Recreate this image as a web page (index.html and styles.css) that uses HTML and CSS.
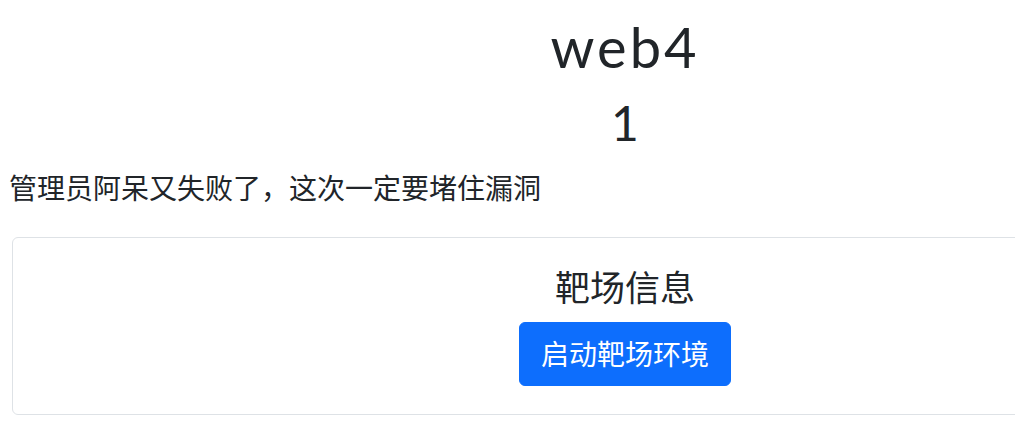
FILE: index.html
```html
<!DOCTYPE html>
<html lang="zh-CN">
<head>
    <meta charset="UTF-8">
    <meta name="viewport" content="width=device-width, initial-scale=1.0">
    <title>web4</title>
    <link rel="stylesheet" href="styles.css">
</head>
<body>
    <div class="page">
        <h1 class="title">web4</h1>
        <h2 class="level">1</h2>
        <p class="desc">管理员阿呆又失败了，这次一定要堵住漏洞</p>

        <div class="card">
            <div class="card-body">
                <h5 class="card-title">靶场信息</h5>
                <button class="btn-start">启动靶场环境</button>
            </div>
        </div>
    </div>
</body>
</html>
```

FILE: styles.css
```css
html {
    overflow: hidden;
}

body {
    margin: 0;
    background-color: #fff;
    color: #212529;
    font-family: Lato, "Noto Sans CJK SC", sans-serif;
    font-size: 28px;
    line-height: 1.5;
}

.page {
    width: 1250px;
    padding-top: 13px;
}

.title,
.level {
    margin: 0 0 14px 0;
    text-align: center;
    font-weight: 400;
    line-height: 1.2;
}

.title {
    font-size: 56px;
    letter-spacing: 3px;
}

.level {
    font-size: 48px;
    margin-bottom: 15px;
}

.desc {
    margin: 0 0 28px 0;
    padding-left: 9px;
}

.card {
    margin: 0 12px;
    border: 1px solid #dee2e6;
    border-radius: 6px;
}

.card-body {
    padding: 28px;
    text-align: center;
}

.card-title {
    margin: 0 0 14px 0;
    font-size: 35px;
    font-weight: 400;
    line-height: 1.2;
}

.btn-start {
    font-family: Lato, "Noto Sans CJK SC", sans-serif;
    font-size: 28px;
    line-height: 1.5;
    color: #fff;
    background-color: #0d6efd;
    border: 1px solid #0d6efd;
    border-radius: 6px;
    padding: 10px 21px;
    cursor: pointer;
}
```
